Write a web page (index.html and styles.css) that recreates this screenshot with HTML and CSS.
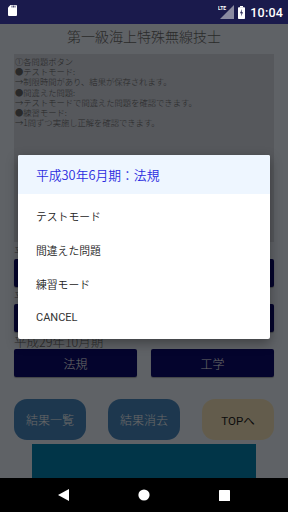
FILE: index.html
```html
<!DOCTYPE html>
<html lang="ja">
<head>
<meta charset="utf-8">
<link rel="stylesheet" href="styles.css">
</head>
<body>
<div class="phone">
  <div class="statusbar">
    <svg class="sd" width="9" height="11" viewBox="0 0 9 11"><path d="M2.5 0H8a1 1 0 0 1 1 1V10a1 1 0 0 1-1 1H1a1 1 0 0 1-1-1V2.5Z" fill="#fff"/><path d="M4 0.5V2.5M5.5 0.5V2.5M7 0.5V2.5" stroke="#1a1a4c" stroke-width="0.8"/></svg>
    <div class="sb-right">
      <svg class="sig" width="16" height="14" viewBox="0 0 16 14"><polygon points="2,14 16,14 16,0" fill="#8a8aa0"/><text x="0" y="5" font-size="5" font-family="Roboto, sans-serif" font-weight="700" fill="#fff">LTE</text></svg>
      <svg class="bat" width="7" height="13" viewBox="0 0 7 13"><rect x="2" y="0" width="3" height="1.5" fill="#fff"/><rect x="0" y="1.2" width="7" height="11.8" rx="0.8" fill="#fff"/><path d="M4 3L2 7.2H3.5L3 10.5L5 6.2H3.6Z" fill="#1a1a4c"/></svg>
      <span class="time">10:04</span>
    </div>
  </div>

  <div class="app">
    <h1 class="title">第一級海上特殊無線技士</h1>
    <div class="info">
      <p>①各問題ボタン</p>
      <p>●テストモード:</p>
      <p>→制限時間があり、結果が保存されます。</p>
      <p>●間違えた問題:</p>
      <p>→テストモードで間違えた問題を確認できます。</p>
      <p>●練習モード:</p>
      <p>→1問ずつ実施し正解を確認できます。</p>
    </div>

    <div class="period">
      <div class="plabel">平成30年6月期</div>
      <div class="brow"><button class="navy">法規</button><button class="navy">工学</button></div>
    </div>
    <div class="period">
      <div class="plabel">平成30年2月期</div>
      <div class="brow"><button class="navy">法規</button><button class="navy">工学</button></div>
    </div>
    <div class="period">
      <div class="plabel">平成29年10月期</div>
      <div class="brow"><button class="navy">法規</button><button class="navy">工学</button></div>
    </div>

    <div class="actions">
      <button class="act blue">結果一覧</button>
      <button class="act blue">結果消去</button>
      <button class="act tan">TOPへ</button>
    </div>
    <div class="ad"></div>

    <div class="scrim"></div>
    <div class="dialog">
      <div class="dhead">平成30年6月期：法規</div>
      <ul class="dlist">
        <li>テストモード</li>
        <li>間違えた問題</li>
        <li>練習モード</li>
        <li class="cancel">CANCEL</li>
      </ul>
    </div>
  </div>

  <div class="navbar">
    <svg width="11" height="12" viewBox="0 0 11 12"><polygon points="11,0 11,12 0,6" fill="#fff"/></svg>
    <svg width="12" height="12" viewBox="0 0 12 12"><circle cx="6" cy="6" r="5.6" fill="#fff"/></svg>
    <svg width="11" height="11" viewBox="0 0 11 11"><rect x="0" y="0" width="11" height="11" rx="0.6" fill="#fff"/></svg>
  </div>
</div>
</body>
</html>
```

FILE: styles.css
```css
* { box-sizing: border-box; margin: 0; padding: 0; }
html, body { width: 288px; height: 512px; overflow: hidden; }
body { font-family: "Noto Sans CJK JP", "Noto Sans", Roboto, sans-serif; font-weight: 300; background: #000; }

.phone { width: 288px; height: 512px; display: flex; flex-direction: column; }

.statusbar {
  height: 24px; flex: none; background: #1a1a4c;
  display: flex; align-items: center; justify-content: space-between;
  padding: 0 5px 0 8px;
}
.sd { margin-top: -3px; }
.sb-right { display: flex; align-items: center; gap: 3px; }
.sig { margin-right: 1px; }
.time { font-family: Roboto, sans-serif; font-weight: 500; font-size: 12.5px; color: #fff; margin-left: 2px; letter-spacing: 0.2px; }

.app {
  position: relative; flex: none; height: 454px; overflow: hidden;
  background: #eef5ff; padding: 0 14px;
}
.title {
  font-weight: 300; font-size: 14px; line-height: 20px; text-align: center;
  color: #6a6a6a; padding-top: 2px; margin-bottom: 8px;
}
.info {
  background: #d6dce6; height: 188px; padding: 2px 1px;
  font-size: 8.3px; line-height: 10.2px; color: #666;
}
.period { margin-top: 2px; }
.plabel { font-size: 12.5px; line-height: 15px; color: #6e6e6e; }
.brow { display: grid; grid-template-columns: 1fr 1fr; gap: 14px; }
button { font-family: inherit; font-weight: 300; border: none; }
.navy {
  height: 28px; background: #0c0c70; color: #fff; font-size: 12px;
  border-radius: 2px; box-shadow: 0 1px 1px rgba(0,0,0,0.3);
}
.actions { display: flex; justify-content: space-between; margin-top: 22px; }
.act { width: 72px; height: 41px; border-radius: 13px; font-size: 12px; }
.blue { background: #4a8bc4; color: #fff; }
.tan { background: #f7e7bd; color: #222; font-family: Roboto, "Noto Sans CJK JP", sans-serif; font-weight: 400; font-size: 11.5px; }
.ad { width: 224px; height: 50px; margin: 4px auto 0; background: #0486b5; }

.scrim { position: absolute; inset: 0; background: rgba(0,0,0,0.6); }
.dialog {
  position: absolute; left: 18px; top: 131px; width: 252px;
  background: #fff; border-radius: 2px;
  box-shadow: 0 4px 12px rgba(0,0,0,0.35);
  overflow: hidden;
}
.dhead {
  height: 39px; background: #eef6ff; color: #2a2ae0;
  font-size: 12.8px; line-height: 39px; padding-left: 18px; font-weight: 350;
}
.dlist { list-style: none; padding: 5px 0 4px; }
.dlist li {
  height: 34px; line-height: 34px; padding-left: 18px;
  font-size: 10.8px; color: #222; font-weight: 350;
}
.dlist .cancel { font-family: Roboto, sans-serif; font-weight: 400; font-size: 11px; color: #333; }

.navbar {
  height: 34px; flex: none; background: #000;
  display: flex; align-items: center; justify-content: space-between;
  padding: 0 58px 0 58px;
}
```
